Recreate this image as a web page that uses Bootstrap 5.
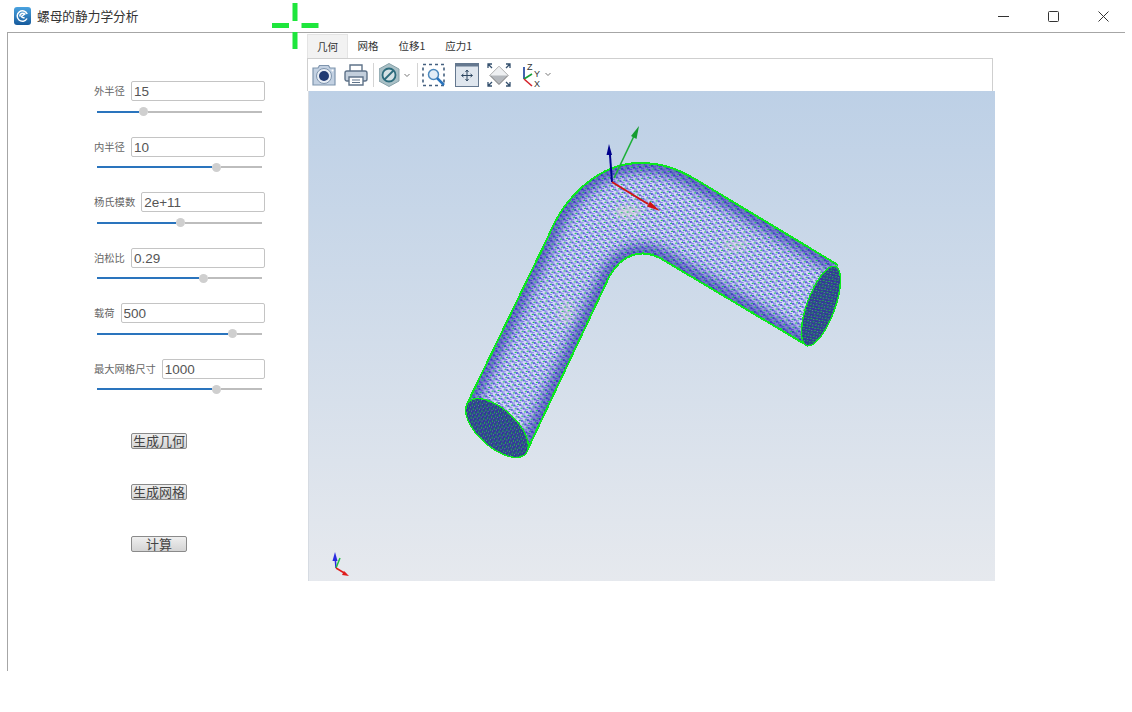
<!doctype html>
<html lang="zh">
<head>
<meta charset="UTF-8" />
<title>螺母的静力学分析</title>
<link href="https://cdn.jsdelivr.net/npm/bootstrap@5.3.0/dist/css/bootstrap.min.css" rel="stylesheet" />
<style>
  body { background:#fff; font-family:"Noto Sans CJK SC","Liberation Sans",sans-serif; color:#333; width:1132px; height:712px; overflow:hidden; position:relative; }
  /* title bar */
  .title-bar { height:32px; padding-left:14px; }
  .title-text { font-size:12.7px; margin-left:6px; color:#333; }
  .win-btns { margin-left:auto; padding-right:23px; gap:39px; }
  /* window frame */
  .frame { margin-left:7px; width:1118px; height:639px; border-top:1px solid #a6a6a6; border-left:1px solid #a6a6a6; }
  /* left panel */
  .side { width:299px; padding:48px 0 0 86px; flex:none; }
  .param { height:55.6px; width:171px; }
  .param-label { font-size:10.3px; color:#666; white-space:nowrap; line-height:20px; }
  .param-input { flex:1; min-width:0; height:20px; margin-left:2px; border:1px solid #c4c4c4; border-radius:2px; padding:1px 2px 0 2px; font:13.5px "Liberation Sans",sans-serif; color:#555; outline:none; }
  .slide { margin:5.500px 3px 0 3px; width:165px; height:10px; }
  .slide-fill { height:2px; background:#2a74bd; }
  .slide-knob { width:9px; height:9px; border-radius:50%; background:#cfcfcf; flex:none; }
  .slide-rest { flex:1; height:2px; background:#bdbdbd; }
  .act-list { padding:18px 0 0 37px; gap:35.500px; }
  .act-btn { width:56px; height:16px; padding:0; border:1px solid #8a8a8a; border-radius:2px; background:linear-gradient(#efefef,#d4d4d4); font-size:13px; line-height:14px; color:#444; }
  /* right column */
  .tabs-row { height:24px; margin-top:1px; font-size:10.5px; color:#333; }
  .tab-item { height:24px; line-height:24px; padding:0 10px; }
  .tab-on { background:#f2f2f2; border-top:1px solid #e4e4e4; border-right:1px solid #e4e4e4; border-left:1px solid #e4e4e4; line-height:23px; padding:0 8.500px 0 9px; }
  .tool-row { width:686px; height:33px; border:1px solid #cfcfcf; border-bottom:0; padding-left:4px; }
  .tool-sep { width:1px; height:24px; background:#d4d4d4; }
  .ml4 { margin-left:4px; } .ml5 { margin-left:5px; } .ml6 { margin-left:6px; }
  .ml8 { margin-left:8px; } .ml9 { margin-left:9px; } .ml10 { margin-left:10px; }
  .viewport { width:687px; height:490px; margin-left:1px; border-left:1px solid #d6dbe2; background:linear-gradient(#bdd0e6,#e6e9ee); display:block; }
  .overlay-cross { position:absolute; left:268px; top:0; }
</style>
</head>
<body>
  <!-- title bar -->
  <div class="title-bar d-flex align-items-center">
    <svg width="17" height="18" viewBox="0 0 17 18">
      <defs><linearGradient id="logoG" x1="0" y1="0" x2="0" y2="1"><stop offset="0" stop-color="#4aa3e0"/><stop offset="1" stop-color="#155a9c"/></linearGradient></defs>
      <rect width="17" height="18" rx="3" fill="url(#logoG)"/>
      <path d="M13 11.500A5.200 5.200 0 1 1 13.200 7M5.800 9.500a3 3 0 0 1 5-2.500L7.500 9.500a2 2 0 0 0 3 .8" fill="none" stroke="#fff" stroke-width="1.500"/>
    </svg>
    <span class="title-text">螺母的静力学分析</span>
    <div class="win-btns d-flex align-items-center">
      <svg width="11" height="11" viewBox="0 0 11 11"><path d="M0 5.500H11" stroke="#333"/></svg>
      <svg width="11" height="11" viewBox="0 0 11 11"><rect x=".5" y=".5" width="10" height="10" rx="1" fill="none" stroke="#333"/></svg>
      <svg width="11" height="11" viewBox="0 0 11 11"><path d="M.5.5l10 10M10.500.5l-10 10" stroke="#333"/></svg>
    </div>
  </div>

  <div class="frame d-flex">
    <!-- parameters -->
    <div class="side">
      <div class="param">
        <div class="d-flex gap-1"><span class="param-label">外半径</span><input class="param-input" value="15" /></div>
        <div class="slide d-flex align-items-center"><div class="slide-fill" style="width:25.5%"></div><div class="slide-knob"></div><div class="slide-rest"></div></div>
      </div>
      <div class="param">
        <div class="d-flex gap-1"><span class="param-label">内半径</span><input class="param-input" value="10" /></div>
        <div class="slide d-flex align-items-center"><div class="slide-fill" style="width:69.5%"></div><div class="slide-knob"></div><div class="slide-rest"></div></div>
      </div>
      <div class="param">
        <div class="d-flex gap-1"><span class="param-label">杨氏模数</span><input class="param-input" value="2e+11" /></div>
        <div class="slide d-flex align-items-center"><div class="slide-fill" style="width:48%"></div><div class="slide-knob"></div><div class="slide-rest"></div></div>
      </div>
      <div class="param">
        <div class="d-flex gap-1"><span class="param-label">泊松比</span><input class="param-input" value="0.29" /></div>
        <div class="slide d-flex align-items-center"><div class="slide-fill" style="width:62%"></div><div class="slide-knob"></div><div class="slide-rest"></div></div>
      </div>
      <div class="param">
        <div class="d-flex gap-1"><span class="param-label">载荷</span><input class="param-input" value="500" /></div>
        <div class="slide d-flex align-items-center"><div class="slide-fill" style="width:79.5%"></div><div class="slide-knob"></div><div class="slide-rest"></div></div>
      </div>
      <div class="param">
        <div class="d-flex gap-1"><span class="param-label">最大网格尺寸</span><input class="param-input" value="1000" /></div>
        <div class="slide d-flex align-items-center"><div class="slide-fill" style="width:69.5%"></div><div class="slide-knob"></div><div class="slide-rest"></div></div>
      </div>
      <div class="act-list d-flex flex-column align-items-start">
        <button class="act-btn">生成几何</button>
        <button class="act-btn">生成网格</button>
        <button class="act-btn">计算</button>
      </div>
    </div>

    <!-- viewer -->
    <div class="d-flex flex-column">
      <div class="tabs-row d-flex">
        <div class="tab-item tab-on">几何</div>
        <div class="tab-item">网格</div>
        <div class="tab-item">位移1</div>
        <div class="tab-item">应力1</div>
      </div>
      <div class="tool-row d-flex align-items-center">
        <!-- camera -->
        <svg width="24" height="24" viewBox="0 0 24 24"><path d="M1 5h5l1.500-2.500h9L18 5h5v17H1z" fill="#c3d1e2" stroke="#7f95ae" stroke-width="1.200"/><circle cx="12" cy="13" r="7.500" fill="#e8eef5" stroke="#7f95ae"/><circle cx="12" cy="13" r="5" fill="#1f3a72"/><circle cx="20.500" cy="7.500" r="1" fill="#fff"/></svg>
        <!-- printer -->
        <svg class="ml8" width="24" height="24" viewBox="0 0 24 24"><path d="M6 9V2h12v7" fill="#fff" stroke="#5f7389" stroke-width="1.400"/><rect x="1" y="8" width="22" height="10" rx="2" fill="#c3cfdc" stroke="#5f7389" stroke-width="1.400"/><path d="M5 14v8h14v-8z" fill="#fff" stroke="#5f7389" stroke-width="1.400"/><path d="M8 17h8M8 19.500h8" stroke="#5f7389"/></svg>
        <div class="tool-sep ml5"></div>
        <!-- display mode -->
        <svg class="ml5" width="32" height="24" viewBox="0 0 32 24"><path d="M10 .5l10 5.500v12l-10 5.500-10-5.500v-12z" fill="#a9c0c6" stroke="#86a0a8"/><circle cx="10" cy="12" r="6.500" fill="#d5e2e5" stroke="#2c6b7c" stroke-width="1.800"/><path d="M5.500 16.500l9-9" stroke="#2c6b7c" stroke-width="1.800"/><path d="M25.500 11l2.500 2.500 2.500-2.500" fill="none" stroke="#777"/></svg>
        <div class="tool-sep ml6"></div>
        <!-- zoom box -->
        <svg class="ml4" width="24" height="24" viewBox="0 0 24 24"><rect x="1" y="1.500" width="21" height="21" fill="none" stroke="#44607f" stroke-width="1.600" stroke-dasharray="3 3"/><circle cx="11.500" cy="11.500" r="5" fill="#e3edf6" stroke="#4d89bd" stroke-width="1.500"/><path d="M15 15l7 7" stroke="#2a74bd" stroke-width="2.500"/></svg>
        <!-- pan -->
        <svg class="ml9" width="24" height="24" viewBox="0 0 24 24"><rect x=".5" y=".5" width="23" height="23" fill="#dfe6ee" stroke="#65788f"/><rect x=".5" y=".5" width="23" height="3" fill="#65788f"/><path d="M12 7.500v10M7 12.500h10M10.500 9l1.500-2 1.500 2M10.500 16l1.500 2 1.500-2M8.500 11l-2 1.500 2 1.500M15.500 11l2 1.500-2 1.500" fill="none" stroke="#2d4660"/></svg>
        <!-- fit -->
        <svg class="ml8" width="24" height="24" viewBox="0 0 24 24"><path d="M12 3.500l9 9-9 9-9-9z" fill="#b4b8bd" stroke="#777"/><path d="M3 12.500l9-9 9 9z" fill="#eef0f2"/><path d="M1 5V1h4M1 1l4 4M23 5V1h-4M23 1l-4 4M1 19v4h4M1 23l4-4M23 19v4h-4M23 23l-4-4" fill="none" stroke="#34506e" stroke-width="1.300"/></svg>
        <!-- triad -->
        <svg class="ml10" width="31" height="26" viewBox="0 0 31 26"><path d="M3 17V5" stroke="#123a9a" stroke-width="1.600"/><path d="M3 17l8-5" stroke="#18a035" stroke-width="1.600"/><path d="M3 17l8 7" stroke="#d5222a" stroke-width="1.600"/><text x="6" y="8" font-size="9" font-family="Liberation Sans" fill="#333">Z</text><text x="13" y="15" font-size="9" font-family="Liberation Sans" fill="#333">Y</text><text x="13" y="25" font-size="9" font-family="Liberation Sans" fill="#333">X</text><path d="M24.500 11l2.500 2.500 2.500-2.500" fill="none" stroke="#777"/></svg>
      </div>
      <!-- 3d scene, coordinates are the window's -->
      <svg class="viewport" viewBox="309 91 686 490">
        <defs>
          <pattern id="meshBody" width="6" height="8" patternUnits="userSpaceOnUse" patternTransform="rotate(-6)" shape-rendering="crispEdges">
            <rect width="6" height="8" fill="#d6d9f8"/>
            <rect x="0" y="0" width="2" height="2" fill="#5c5cdc"/>
            <rect x="3" y="4" width="2" height="2" fill="#5c5cdc"/>
            <rect x="2" y="1" width="1" height="3" fill="#8a8ae8"/>
            <rect x="5" y="5" width="1" height="3" fill="#8a8ae8"/>
            <rect x="3" y="2" width="2" height="1" fill="#7c7ce4"/>
            <rect x="0" y="6" width="2" height="1" fill="#7c7ce4"/>
          </pattern>
          <pattern id="meshDots" width="6" height="8" patternUnits="userSpaceOnUse" patternTransform="rotate(-6)" shape-rendering="crispEdges">
            <rect x="4" y="0" width="2" height="1" fill="#16c850"/>
            <rect x="1" y="4" width="2" height="1" fill="#16c850"/>
          </pattern>
          <pattern id="meshFace" width="4" height="4" patternUnits="userSpaceOnUse" patternTransform="rotate(35)" shape-rendering="crispEdges">
            <rect width="4" height="4" fill="#34349c"/>
            <rect x="0" y="0" width="2" height="1" fill="#1fb24a"/>
            <rect x="2" y="2" width="1" height="1" fill="#6a74b4"/>
            <rect x="3" y="3" width="1" height="1" fill="#1c8a50"/>
            <rect x="1" y="2" width="1" height="1" fill="#1c8a50"/>
          </pattern>
          <clipPath id="tubeClip"><path d="M467,404L548,237C565,195 600,163 640,163C665,163 680,170 700,182L838,265L808,346L660,258C640,248 622,255 610,275L525,455Z"/></clipPath>
          <filter id="soft" x="-30%" y="-30%" width="160%" height="160%"><feGaussianBlur stdDeviation="6"/></filter>
          <filter id="softer" x="-50%" y="-50%" width="200%" height="200%"><feGaussianBlur stdDeviation="3"/></filter>
        </defs>
        <!-- tube -->
        <path d="M467,404L548,237C565,195 600,163 640,163C665,163 680,170 700,182L838,265L808,346L660,258C640,248 622,255 610,275L525,455Z" fill="url(#meshBody)"/>
        <g clip-path="url(#tubeClip)">
          <path d="M467,404L548,237C565,195 600,163 640,163C665,163 680,170 700,182L838,265M808,346L660,258C640,248 622,255 610,275L525,455" fill="none" stroke="#1212a0" stroke-width="18" opacity=".6" filter="url(#soft)"/>
          <ellipse cx="628" cy="212" rx="13" ry="6" fill="#d8d8d8" opacity=".7" filter="url(#softer)"/>
          <ellipse cx="566" cy="312" rx="7" ry="12" fill="#d8d8d8" opacity=".45" filter="url(#softer)"/>
          <ellipse cx="735" cy="245" rx="12" ry="6" fill="#d8d8d8" opacity=".45" filter="url(#softer)"/>
          <rect x="440" y="150" width="400" height="310" fill="url(#meshDots)"/>
        </g>
        <path d="M467,404L548,237C565,195 600,163 640,163C665,163 680,170 700,182L838,265M808,346L660,258C640,248 622,255 610,275L525,455" fill="none" stroke="#0ce81e" stroke-width="2" shape-rendering="crispEdges"/>
        <ellipse cx="497" cy="428" rx="38.500" ry="19" transform="rotate(42 497 428)" fill="url(#meshFace)" stroke="#0ce81e" stroke-width="1.400" shape-rendering="crispEdges"/>
        <ellipse cx="821" cy="306" rx="42" ry="14" transform="rotate(-70 821 306)" fill="url(#meshFace)" stroke="#0ce81e" stroke-width="1.400" shape-rendering="crispEdges"/>
        <!-- axes -->
        <path d="M612,182L610,155" stroke="#00008c" stroke-width="2"/>
        <path d="M609,144L612,155L606.500,155Z" fill="#00008c"/>
        <path d="M614,178L634,136" stroke="#1cb038" stroke-width="1.600"/>
        <path d="M639,126L636.500,139L631,136Z" fill="#159c30"/>
        <path d="M612,182L648,204" stroke="#d01414" stroke-width="2"/>
        <path d="M660,211L647,206.500L650,201.500Z" fill="#d01414"/>
        <!-- small triad -->
        <path d="M336,568L335,556" stroke="#2a2ae0" stroke-width="1.500"/>
        <path d="M335,552L337.500,561L332.500,561Z" fill="#2a2ae0"/>
        <path d="M336,568L340,558" stroke="#20c040" stroke-width="1.500"/>
        <path d="M336,568L346,574" stroke="#e01c1c" stroke-width="1.500"/>
        <path d="M349,576L342,575L344,571Z" fill="#e01c1c"/>
      </svg>
    </div>
  </div>

  <!-- green crosshair lying over the window -->
  <svg class="overlay-cross" width="54" height="52" viewBox="268 0 54 52">
    <path d="M295 3V21M295 32V49M272 25.500H289M301.500 25.500H318.500" stroke="#1ee63c" stroke-width="5" fill="none"/>
  </svg>
  <script src="https://cdn.jsdelivr.net/npm/bootstrap@5.3.0/dist/js/bootstrap.bundle.min.js"></script>
</body>
</html>
